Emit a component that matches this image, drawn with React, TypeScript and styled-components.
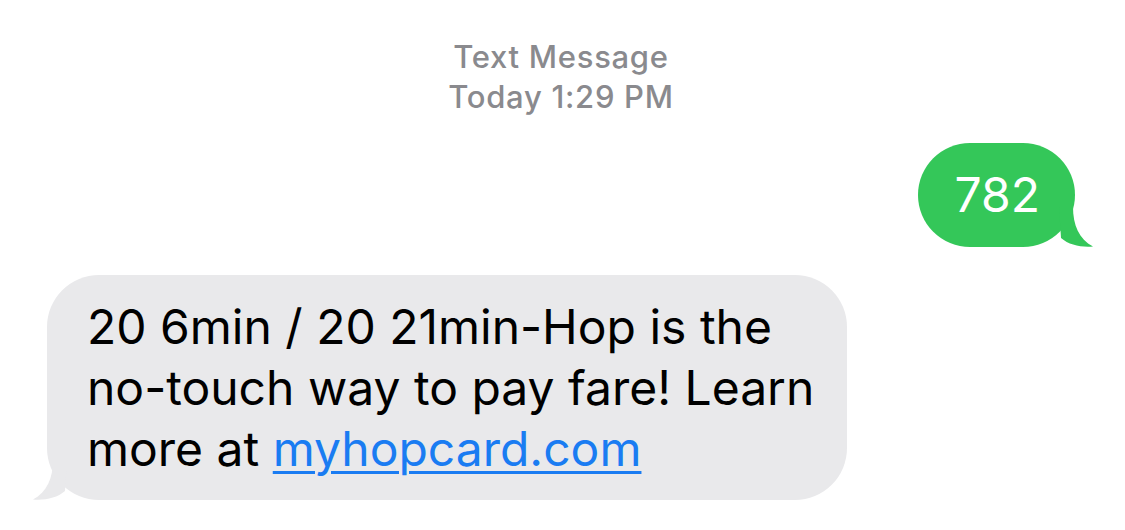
import styled, { createGlobalStyle } from 'styled-components'

const GlobalStyle = createGlobalStyle`
  html, body {
    margin: 0;
    padding: 0;
    background: #ffffff;
  }
  body {
    font-family: Inter, "Liberation Sans", sans-serif;
    -webkit-font-smoothing: antialiased;
  }
`

const Screen = styled.div`
  width: 1125px;
  height: 530px;
  box-sizing: border-box;
  padding: 37px 50px 0 47px;
  display: flex;
  flex-direction: column;
  overflow: hidden;
`

const Header = styled.div`
  display: flex;
  flex-direction: column;
  align-items: center;
  color: #8a8a8e;
  font-size: 31px;
  font-weight: 500;
  line-height: 40px;
  letter-spacing: 0.7px;
`

const Row = styled.div<{ $side: 'left' | 'right' }>`
  display: flex;
  justify-content: ${(p) => (p.$side === 'right' ? 'flex-end' : 'flex-start')};
  margin-top: ${(p) => (p.$side === 'right' ? '26px' : '28px')};
`

const Bubble = styled.div<{ $side: 'left' | 'right' }>`
  position: relative;
  box-sizing: border-box;
  font-size: 48px;
  line-height: 61px;
  white-space: nowrap;
  background: ${(p) => (p.$side === 'right' ? '#34c759' : '#e9e9eb')};
  color: ${(p) => (p.$side === 'right' ? '#ffffff' : '#000000')};
  border-radius: 52px;
  padding: ${(p) => (p.$side === 'right' ? '21px 35px 22px 37px' : '21px 40px 21px 40px')};
  width: ${(p) => (p.$side === 'right' ? 'auto' : '800px')};
`

const Link = styled.a`
  color: #1a7cf2;
  text-decoration: underline;
  text-decoration-thickness: 3px;
  text-underline-offset: 5px;
`

const Tail = styled.svg<{ $side: 'left' | 'right' }>`
  position: absolute;
  bottom: 0;
  width: 34px;
  height: 40px;
  ${(p) => (p.$side === 'right' ? 'right: -18px;' : 'left: -14px;')}
  ${(p) => (p.$side === 'left' ? 'transform: scaleX(-1);' : '')}
`

function BubbleTail({ side, color }: { side: 'left' | 'right'; color: string }) {
  return (
    <Tail $side={side} viewBox="0 0 34 40">
      <path
        d="M0 0 L14 0 C14 18 20 32 34 39.5 C22 40.5 10 38 2 31 Z"
        fill={color}
      />
    </Tail>
  )
}

export default function App() {
  return (
    <>
      <GlobalStyle />
      <Screen>
        <Header>
          <span>Text Message</span>
          <span>Today 1:29 PM</span>
        </Header>
        <Row $side="right">
          <Bubble $side="right">
            782
            <BubbleTail side="right" color="#34c759" />
          </Bubble>
        </Row>
        <Row $side="left">
          <Bubble $side="left">
            20 6min / 20 21min-Hop is the
            <br />
            no-touch way to pay fare! Learn
            <br />
            more at <Link href="#">myhopcard.com</Link>
            <BubbleTail side="left" color="#e9e9eb" />
          </Bubble>
        </Row>
      </Screen>
    </>
  )
}
